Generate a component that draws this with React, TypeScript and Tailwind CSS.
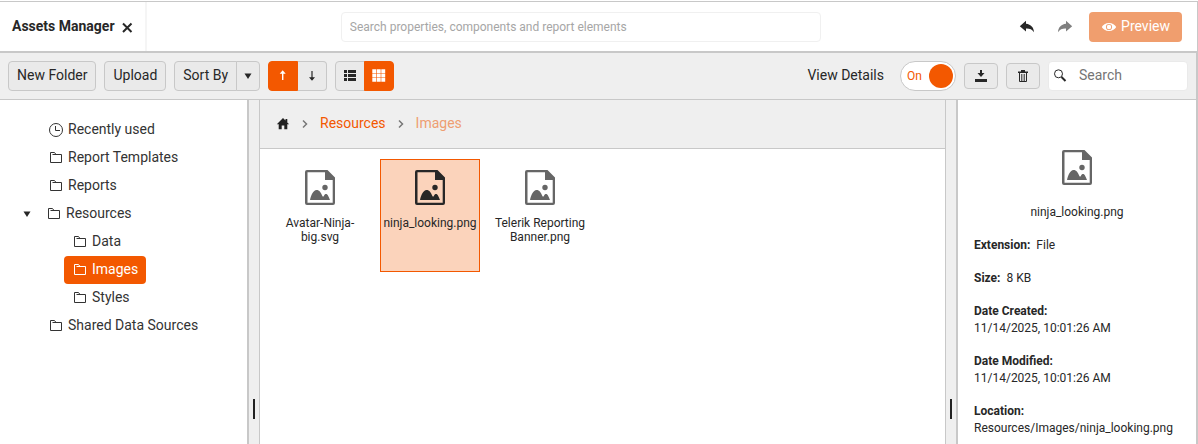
import { useState } from "react";
import type { ReactNode } from "react";
import clsx from "clsx";

type TreeItem = {
  label: string;
  icon?: "clock" | "folder";
  children?: TreeItem[];
};

type Asset = {
  name: string;
};

type Detail = {
  label: string;
  value: string;
  stacked?: boolean;
};

const TREE: TreeItem[] = [
  { label: "Recently used", icon: "clock" },
  { label: "Report Templates" },
  { label: "Reports" },
  {
    label: "Resources",
    children: [{ label: "Data" }, { label: "Images" }, { label: "Styles" }],
  },
  { label: "Shared Data Sources" },
];

const ASSETS: Asset[] = [
  { name: "Avatar-Ninja-big.svg" },
  { name: "ninja_looking.png" },
  { name: "Telerik Reporting Banner.png" },
];

const DETAILS: Detail[] = [
  { label: "Extension:", value: "File" },
  { label: "Size:", value: "8 KB" },
  { label: "Date Created:", value: "11/14/2025, 10:01:26 AM", stacked: true },
  { label: "Date Modified:", value: "11/14/2025, 10:01:26 AM", stacked: true },
  { label: "Location:", value: "Resources/Images/ninja_looking.png", stacked: true },
];

function Icon({ className, children }: { className?: string; children: ReactNode }) {
  return (
    <svg
      viewBox="0 0 16 16"
      fill="currentColor"
      aria-hidden="true"
      className={clsx("h-4 w-4 shrink-0", className)}
    >
      {children}
    </svg>
  );
}

function FolderIcon() {
  return (
    <Icon>
      <path
        d="M2.5 12.5V2.5H6.5L8 4.5M4.5 4.5H13.5V12.5H2.5"
        fill="none"
        stroke="currentColor"
      />
    </Icon>
  );
}

function ClockIcon() {
  return (
    <Icon>
      <circle cx="8" cy="8" r="6.5" fill="none" stroke="currentColor" />
      <path d="M7.5 4V8.5H12" fill="none" stroke="currentColor" />
    </Icon>
  );
}

function UndoIcon({ className }: { className?: string }) {
  return (
    <Icon className={className}>
      <path d="M7 1.8.8 7.3 7 12.500V9.600c3.400-.2 6 .8 8 3.600-.3-4.900-3-7.900-8-8.500z" />
    </Icon>
  );
}

function CaretIcon({ className }: { className?: string }) {
  return (
    <Icon className={className}>
      <path d="M4.500 5.500h7L8 11z" />
    </Icon>
  );
}

function ChevronIcon() {
  return (
    <Icon className="text-[#777]">
      <path d="M6 5.500 9.500 9 6 12.500" fill="none" stroke="currentColor" strokeWidth="1.500" />
    </Icon>
  );
}

function ImageFileIcon({ className }: { className?: string }) {
  return (
    <svg
      viewBox="0 0 30 35"
      fill="currentColor"
      aria-hidden="true"
      className={clsx("h-[35px] w-[30px] shrink-0", className)}
    >
      <path
        fillRule="evenodd"
        d="M2 0H22.500L30 7.500V33a2 2 0 0 1-2 2H2a2 2 0 0 1-2-2V2a2 2 0 0 1 2-2ZM2.500 2.300V32.700H27.700V10H20V2.300Z"
      />
      <circle cx="20" cy="17.500" r="2.700" />
      <path d="M5 30c1-4.500 3.300-10 6.500-10 3 0 4.500 2.700 6 6.300.5.600 1 .3 1.400-.4.900-2.400 3.200-2.500 4.200-.200.700 1.500 1.500 2.800 1.900 4.300Z" />
    </svg>
  );
}

function Splitter({ className }: { className: string }) {
  return (
    <div
      role="separator"
      aria-orientation="vertical"
      className={clsx(
        "flex w-[13px] shrink-0 items-end justify-center border-[#c8c8c8] bg-[#efefef] pb-[25px]",
        className,
      )}
    >
      <span className="h-5 w-0.5 bg-[#222]" />
    </div>
  );
}

function TreeNode({
  item,
  selected,
  onSelect,
  nested,
}: {
  item: TreeItem;
  selected: string;
  onSelect: (label: string) => void;
  nested?: boolean;
}) {
  const active = item.label === selected;

  return (
    <li>
      <div className={clsx("flex h-7 items-center", nested ? "pl-16" : item.children ? "pl-[19px]" : "pl-10")}>
        {item.children && <CaretIcon className="mr-[3px]" />}
        <button
          type="button"
          onClick={() => onSelect(item.label)}
          className={clsx(
            "flex h-7 items-center gap-1 rounded px-2",
            active ? "bg-[#f35800] text-white" : "text-[#333]",
          )}
        >
          {item.icon === "clock" ? <ClockIcon /> : <FolderIcon />}
          <span className="pb-0.5">{item.label}</span>
        </button>
      </div>
      {item.children && (
        <ul>
          {item.children.map((child) => (
            <TreeNode key={child.label} item={child} selected={selected} onSelect={onSelect} nested />
          ))}
        </ul>
      )}
    </li>
  );
}

function Header() {
  return (
    <header className="flex h-[51px] shrink-0 items-center border-r border-b-2 border-[#c8c8c8] bg-white">
      <div className="flex h-full items-center gap-1 border-r-2 border-[#f5f5f5] pr-2.5 pl-3">
        <span className="pb-0.5 font-bold">Assets Manager</span>
        <button type="button" aria-label="Close">
          <Icon>
            <path d="M4 4.500 12.500 13M12.500 4.500 4 13" fill="none" stroke="currentColor" strokeWidth="2" />
          </Icon>
        </button>
      </div>
      <div className="flex flex-1 justify-center">
        <input
          type="text"
          aria-label="Search properties, components and report elements"
          placeholder="Search properties, components and report elements"
          className="h-[30px] w-[480px] rounded border border-[#f0f0f0] px-2 text-xs placeholder:text-[#a6a6a6]"
        />
      </div>
      <div className="flex items-center pr-[15px]">
        <button type="button" aria-label="Undo" className="px-1">
          <UndoIcon />
        </button>
        <button type="button" aria-label="Redo" className="ml-3.5 px-1 text-[#808080]">
          <UndoIcon className="-scale-x-100" />
        </button>
        <button
          type="button"
          className="ml-3 flex h-[30px] items-center gap-1 rounded bg-[#f09e6e] px-3 text-white"
        >
          <Icon>
            <path
              fillRule="evenodd"
              d="M8 4C4.500 4 2 5.700.8 8 2 10.300 4.500 12 8 12s6-1.700 7.200-4C14 5.700 11.500 4 8 4Zm0 .9a3.100 3.100 0 1 1 0 6.200 3.100 3.100 0 0 1 0-6.200Z"
            />
            <circle cx="8" cy="8" r="2.200" />
          </Icon>
          <span className="pb-0.5">Preview</span>
        </button>
      </div>
    </header>
  );
}

function Toolbar({
  showDetails,
  onToggleDetails,
}: {
  showDetails: boolean;
  onToggleDetails: (value: boolean) => void;
}) {
  const [ascending, setAscending] = useState(true);
  const [grid, setGrid] = useState(true);

  const button = "flex h-[30px] items-center justify-center border border-[#c8c8c8] bg-[#eaeaea]";
  const pressed = "flex h-[30px] items-center justify-center border border-[#f35800] bg-[#f35800] text-white";

  return (
    <div className="flex h-[47px] shrink-0 items-center gap-2 border-r-2 border-b border-[#c8c8c8] bg-[#efefef] pr-2 pl-2">
      <button type="button" className={clsx(button, "rounded px-2 pb-0.5")}>
        New Folder
      </button>
      <button type="button" className={clsx(button, "rounded px-2 pb-0.5")}>
        Upload
      </button>
      <div className="flex">
        <button type="button" className={clsx(button, "rounded-l px-2 pb-0.5")}>
          Sort By
        </button>
        <button type="button" aria-label="Sort options" className={clsx(button, "-ml-px w-6 rounded-r")}>
          <CaretIcon />
        </button>
      </div>
      <div className="flex">
        <button
          type="button"
          aria-label="Ascending"
          onClick={() => setAscending(true)}
          className={clsx(ascending ? pressed : button, "w-[30px] rounded-l")}
        >
          <Icon>
            <path d="M7 12V5.800H4.700L7.700 2.300 10.700 5.800H8.400V12Z" />
          </Icon>
        </button>
        <button
          type="button"
          aria-label="Descending"
          onClick={() => setAscending(false)}
          className={clsx(ascending ? button : pressed, "w-[29px] rounded-r border-l-0")}
        >
          <Icon>
            <path d="M7.400 3V9.200H5L8 12.700 11 9.200H8.600V3Z" />
          </Icon>
        </button>
      </div>
      <div className="flex">
        <button
          type="button"
          aria-label="List view"
          onClick={() => setGrid(false)}
          className={clsx(grid ? button : pressed, "w-[30px] rounded-l")}
        >
          <Icon>
            <path d="M2 2h3v3H2zM6 2h8v3H6zM2 6h3v3H2zM6 6h8v3H6zM2 10h3v3H2zM6 10h8v3H6z" />
          </Icon>
        </button>
        <button
          type="button"
          aria-label="Grid view"
          onClick={() => setGrid(true)}
          className={clsx(grid ? pressed : button, "-ml-px w-[30px] rounded-r")}
        >
          <Icon>
            <path d="M1.300 1.200h3.900v3.800H1.300zM5.800 1.200h3.900v3.800H5.800zM10.300 1.200h3.900v3.800h-3.900zM1.300 5.600h3.900v3.800H1.300zM5.800 5.600h3.900v3.800H5.800zM10.300 5.600h3.900v3.800h-3.900zM1.300 10h3.900v3.800H1.300zM5.800 10h3.900v3.800H5.800zM10.300 10h3.900v3.800h-3.900z" />
          </Icon>
        </button>
      </div>

      <label className="ml-auto flex items-center gap-4">
        <span className="pb-0.5">View Details</span>
        <input
          type="checkbox"
          role="switch"
          checked={showDetails}
          onChange={(e) => onToggleDetails(e.target.checked)}
          className="sr-only"
        />
        <span
          className={clsx(
            "flex h-[30px] w-14 items-center justify-between rounded-full border border-[#c8c8c8] bg-white pr-0.5 pl-1.5 text-xs text-[#f35800]",
            !showDetails && "flex-row-reverse",
          )}
        >
          <span>{showDetails ? "On" : "Off"}</span>
          <span className="h-6 w-6 rounded-full bg-[#f35800]" />
        </span>
      </label>
      <button type="button" aria-label="Download" className="flex h-[26px] w-[34px] items-center justify-center rounded border border-[#c8c8c8] bg-[#eaeaea]">
        <Icon>
          <path d="M7 2h2v3h2.500L8 9 4.500 5H7zM2 11h12v3H2z" />
        </Icon>
      </button>
      <button type="button" aria-label="Delete" className="flex h-[26px] w-[34px] items-center justify-center rounded border border-[#c8c8c8] bg-[#eaeaea]">
        <Icon>
          <path d="M6 2h4v1.500h3v1.500H3V3.500h3z" />
          <path d="M4.500 5v8.500h7V5M6.800 6v7M9.200 6v7" fill="none" stroke="currentColor" />
        </Icon>
      </button>
      <div className="flex h-[30px] w-[140px] items-center gap-2.5 rounded border border-[#eaeaea] bg-white pl-1">
        <Icon>
          <circle cx="5.500" cy="5.800" r="4" fill="none" stroke="currentColor" />
          <path d="m8.500 9 4 4" stroke="currentColor" strokeWidth="2" />
        </Icon>
        <input
          type="text"
          aria-label="Search"
          placeholder="Search"
          className="w-full min-w-0 pb-0.5 outline-none placeholder:text-[#757575]"
        />
      </div>
    </div>
  );
}

function Breadcrumb() {
  return (
    <nav className="flex h-[49px] shrink-0 items-center gap-[7px] border-b border-[#c8c8c8] bg-[#efefef] pb-0.5 pl-3.5 text-[#f35800]">
      <a href="#home" aria-label="Home" className="text-[#222]">
        <Icon>
          <path d="M9 3 2.800 9.300H4.700V14.300H7.700V10.500H10.300V14.300H13.300V9.300H15.200L13.300 7.400V4H11.500V5.500Z" />
        </Icon>
      </a>
      <ChevronIcon />
      <a href="#resources">Resources</a>
      <ChevronIcon />
      <span className="text-[#ee9e72]">Images</span>
    </nav>
  );
}

function AssetCard({
  asset,
  selected,
  onSelect,
}: {
  asset: Asset;
  selected: boolean;
  onSelect: () => void;
}) {
  return (
    <button
      type="button"
      onClick={onSelect}
      className={clsx(
        "flex h-[113px] w-[100px] flex-col items-center border pt-2.5 text-xs leading-[14px]",
        selected ? "border-[#f35800] bg-[#fbd3bb]" : "border-transparent",
      )}
    >
      <ImageFileIcon className={selected ? "text-[#272727]" : "text-[#666]"} />
      <span className="mt-[11px] max-w-full px-0.5">{asset.name}</span>
    </button>
  );
}

function DetailsPanel({ name }: { name: string }) {
  return (
    <aside className="flex w-60 shrink-0 flex-col border-r-2 border-[#c8c8c8] px-4 pt-[50px] text-xs leading-[17px]">
      <div className="flex flex-col items-center gap-[19px]">
        <ImageFileIcon className="text-[#666]" />
        <span>{name}</span>
      </div>
      <dl className="mt-4 flex flex-col gap-4">
        {DETAILS.map((detail) => (
          <div key={detail.label} className={detail.stacked ? "block" : "flex gap-1.5"}>
            <dt className="font-bold">{detail.label}</dt>
            <dd>{detail.value}</dd>
          </div>
        ))}
      </dl>
    </aside>
  );
}

export default function App() {
  const [folder, setFolder] = useState("Images");
  const [assetName, setAssetName] = useState("ninja_looking.png");
  const [showDetails, setShowDetails] = useState(true);

  return (
    <div className="flex h-screen flex-col overflow-hidden bg-white pt-px font-['Roboto',sans-serif] text-sm text-[#272727]">
      <div className="h-px shrink-0 bg-[#c8c8c8]" />
      <Header />
      <Toolbar showDetails={showDetails} onToggleDetails={setShowDetails} />
      <div className="flex min-h-0 flex-1">
        <aside className="w-[247px] shrink-0 pt-4">
          <ul>
            {TREE.map((item) => (
              <TreeNode key={item.label} item={item} selected={folder} onSelect={setFolder} />
            ))}
          </ul>
        </aside>
        <Splitter className="border-r border-l-2" />
        <main className="flex min-w-0 flex-1 flex-col">
          <Breadcrumb />
          <div className="flex flex-wrap gap-2.5 p-2.5">
            {ASSETS.map((asset) => (
              <AssetCard
                key={asset.name}
                asset={asset}
                selected={asset.name === assetName}
                onSelect={() => setAssetName(asset.name)}
              />
            ))}
          </div>
        </main>
        {showDetails && (
          <>
            <Splitter className="border-r-2 border-l" />
            <DetailsPanel name={assetName} />
          </>
        )}
      </div>
    </div>
  );
}
